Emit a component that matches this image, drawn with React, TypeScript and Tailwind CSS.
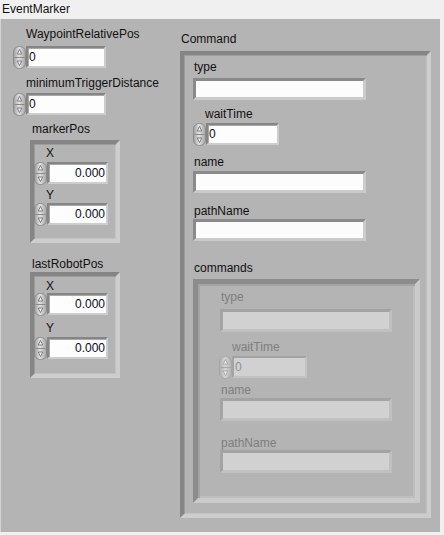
import React from 'react';

type CtlProps = {
  value: string;
  box: string;
  right?: boolean;
  disabled?: boolean;
  className?: string;
};

const Spinner = ({ disabled = false }: { disabled?: boolean }) => {
  const id = disabled ? 'spinOff' : 'spinOn';
  const rim = disabled ? '#a6a6a6' : '#8a8a8a';
  const tri = disabled ? '#9c9c9c' : '#686868';
  return (
    <svg width="13" height="23" viewBox="0 0 13 23" className="-my-[1px] shrink-0">
      <defs>
        <linearGradient id={id} x1="0" x2="1" y1="0" y2="0">
          <stop offset="0" stopColor={disabled ? '#adadad' : '#9c9c9c'} />
          <stop offset="0.45" stopColor={disabled ? '#d4d4d4' : '#e2e2e2'} />
          <stop offset="1" stopColor={disabled ? '#b1b1b1' : '#a4a4a4'} />
        </linearGradient>
      </defs>
      <path
        d="M6.5 0.5 C10 0.5 12.5 3 12.5 6 L12.5 17 C12.5 20 10 22.5 6.5 22.5 C3 22.5 0.5 20 0.5 17 L0.5 6 C0.5 3 3 0.5 6.5 0.5 Z"
        fill={`url(#${id})`}
        stroke={rim}
      />
      <path d="M1.5 11.5 L11.5 11.5" stroke={rim} strokeWidth="1" />
      <path d="M6.5 3.4 L4.3 8 L8.7 8 Z" fill="#f2f2f2" stroke={tri} strokeWidth="0.8" />
      <path d="M6.5 19.6 L4.3 15 L8.7 15 Z" fill="#f2f2f2" stroke={tri} strokeWidth="0.8" />
    </svg>
  );
};

const NumCtl = ({ value, box, right = false, disabled = false, className = '' }: CtlProps) => (
  <div className={`flex h-[22px] items-center ${className}`}>
    <Spinner disabled={disabled} />
    <div
      className={`flex h-[22px] items-center border-2 px-[1px] ${box} ${right ? 'justify-end' : ''} ${
        disabled
          ? 'border-t-[#a3a3a3] border-l-[#a3a3a3] border-r-[#c2c2c2] border-b-[#c2c2c2] bg-[#d1d1d1] text-[#8592a3]'
          : 'border-t-[#858585] border-l-[#858585] border-r-[#cdcdcd] border-b-[#cdcdcd] bg-[#fdfdfd] text-[#0a0a20] shadow-[inset_1px_1px_0_#a8a8a8]'
      }`}
    >
      {value}
    </div>
  </div>
);

const StrCtl = ({ disabled = false, className = '' }: { disabled?: boolean; className?: string }) => (
  <div
    className={`border-[3px] ${className} ${
      disabled
        ? 'h-[23px] w-[172px] border-t-[#a3a3a3] border-l-[#a3a3a3] border-r-[#c0c0c0] border-b-[#c0c0c0] bg-[#d1d1d1]'
        : 'h-[22px] w-[173px] border-t-[#8a8a8a] border-l-[#8a8a8a] border-r-[#cbcbcb] border-b-[#cbcbcb] bg-[#fcfcfc]'
    }`}
  />
);

const Label = ({ text, className = '', disabled = false }: { text: string; className?: string; disabled?: boolean }) => (
  <div className={`h-[14px] whitespace-nowrap ${disabled ? 'text-[#7e7e7e]' : 'text-[#111111]'} ${className}`}>{text}</div>
);

const frame =
  'border-[4px] border-t-[#858585] border-l-[#858585] border-r-[#cdcdcd] border-b-[#cdcdcd] shadow-[inset_1px_1px_0_#9c9c9c,inset_-1px_-1px_0_#c2c2c2]';

export default function App() {
  return (
    <div className="h-[535px] w-[444px] bg-[#f0f0f0] font-['Liberation_Sans',Arial,sans-serif] text-[12px] leading-[14px] text-[#111111]">
      <div className="h-[19px] pl-[2px] pt-[2px]">EventMarker</div>
      <div className="flex h-[513px] w-[440px] border-l border-[#d4d4d4] bg-[#b4b4b4]">
        <div className="flex w-[167px] shrink-0 flex-col pl-[12px]">
          <Label text="WaypointRelativePos" className="mt-[8px] ml-[13px]" />
          <NumCtl value="0" box="w-[80px]" className="mt-[5px]" />
          <Label text="minimumTriggerDistance" className="mt-[8px] ml-[13px]" />
          <NumCtl value="0" box="w-[80px]" className="mt-[3px]" />

          <Label text="markerPos" className="mt-[7px] ml-[19px]" />
          <div className={`mt-[4px] ml-[17px] flex h-[103px] w-[90px] flex-col ${frame}`}>
            <Label text="X" className="mt-[2px] ml-[12px]" />
            <NumCtl value="0.000" box="w-[61px]" right className="mt-[2px]" />
            <Label text="Y" className="mt-[4px] ml-[12px]" />
            <NumCtl value="0.000" box="w-[61px]" right className="mt-[1px]" />
          </div>

          <Label text="lastRobotPos" className="mt-[14px] ml-[19px]" />
          <div className={`mt-[1px] ml-[17px] flex h-[106px] w-[90px] flex-col ${frame}`}>
            <Label text="X" className="mt-[3px] ml-[12px]" />
            <NumCtl value="0.000" box="w-[61px]" right />
            <Label text="Y" className="mt-[6px] ml-[12px]" />
            <NumCtl value="0.000" box="w-[61px]" right className="mt-[2px]" />
          </div>
        </div>

        <div className="ml-[12px] flex flex-col">
          <Label text="Command" className="mt-[13px] ml-[1px]" />
          <div className={`mt-[5px] flex h-[467px] w-[251px] flex-col ${frame}`}>
            <Label text="type" className="mt-[5px] ml-[10px]" />
            <StrCtl className="mt-[4px] ml-[9px]" />
            <Label text="waitTime" className="mt-[7px] ml-[21px]" />
            <NumCtl value="0" box="w-[73px]" className="mt-[2px] ml-[9px]" />
            <Label text="name" className="mt-[10px] ml-[10px]" />
            <StrCtl className="mt-[2px] ml-[9px]" />
            <Label text="pathName" className="mt-[11px] ml-[10px]" />
            <StrCtl className="mt-[1px] ml-[9px]" />
            <Label text="commands" className="mt-[20px] ml-[10px]" />

            <div className="mt-[4px] ml-[9px] flex h-[224px] w-[227px] flex-col border-[5px] border-t-[#8c8c8c] border-l-[#8c8c8c] border-r-[#cacaca] border-b-[#cacaca] shadow-[inset_2px_2px_0_#a4a4a4,inset_-2px_-2px_0_#bebebe]">
              <Label text="type" disabled className="mt-[6px] ml-[23px]" />
              <StrCtl disabled className="mt-[5px] ml-[22px]" />
              <Label text="waitTime" disabled className="mt-[8px] ml-[34px]" />
              <NumCtl value="0" box="w-[75px]" disabled className="mt-[2px] ml-[21px]" />
              <Label text="name" disabled className="mt-[5px] ml-[23px]" />
              <StrCtl disabled className="mt-[1px] ml-[22px]" />
              <Label text="pathName" disabled className="mt-[15px] ml-[23px]" />
              <StrCtl disabled className="ml-[22px]" />
            </div>
          </div>
        </div>
      </div>
    </div>
  );
}
